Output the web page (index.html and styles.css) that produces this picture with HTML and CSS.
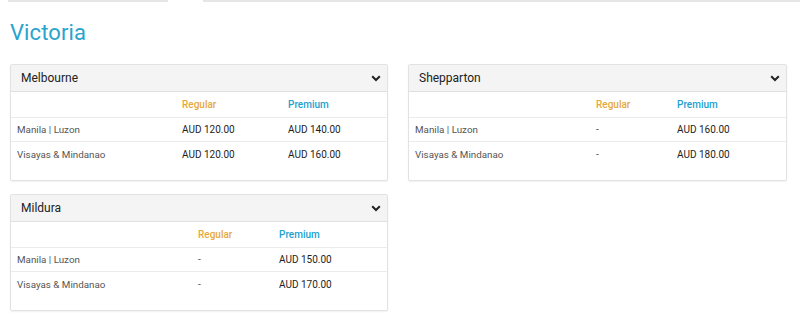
FILE: index.html
```html
<!DOCTYPE html>
<html>
<head>
<meta charset="utf-8">
<link rel="stylesheet" href="styles.css">
</head>
<body>
<div class="tabs"><span class="tab-line first"></span><span class="tab-gap"></span><span class="tab-line rest"></span></div>
<h1 class="title">Victoria</h1>
<div class="grid">
  <div class="card">
    <div class="card-head"><span>Melbourne</span>
      <svg class="chev" viewBox="0 0 10 7" width="10" height="7"><path d="M1.2 1.2 L5 5 L8.8 1.2" fill="none" stroke="#222" stroke-width="2"/></svg>
    </div>
    <table class="rates t1">
      <colgroup><col class="c1"><col class="c2"><col class="c3"></colgroup>
      <tr class="hr"><td></td><td class="reg">Regular</td><td class="prem">Premium</td></tr>
      <tr><td class="dest">Manila | Luzon</td><td class="val">AUD 120.00</td><td class="val">AUD 140.00</td></tr>
      <tr><td class="dest">Visayas &amp; Mindanao</td><td class="val">AUD 120.00</td><td class="val">AUD 160.00</td></tr>
    </table>
  </div>
  <div class="card wide">
    <div class="card-head"><span>Shepparton</span>
      <svg class="chev" viewBox="0 0 10 7" width="10" height="7"><path d="M1.2 1.2 L5 5 L8.8 1.2" fill="none" stroke="#222" stroke-width="2"/></svg>
    </div>
    <table class="rates t2">
      <colgroup><col class="c1"><col class="c2"><col class="c3"></colgroup>
      <tr class="hr"><td></td><td class="reg">Regular</td><td class="prem">Premium</td></tr>
      <tr><td class="dest">Manila | Luzon</td><td class="dash">-</td><td class="val">AUD 160.00</td></tr>
      <tr><td class="dest">Visayas &amp; Mindanao</td><td class="dash">-</td><td class="val">AUD 180.00</td></tr>
    </table>
  </div>
  <div class="card">
    <div class="card-head"><span>Mildura</span>
      <svg class="chev" viewBox="0 0 10 7" width="10" height="7"><path d="M1.2 1.2 L5 5 L8.8 1.2" fill="none" stroke="#222" stroke-width="2"/></svg>
    </div>
    <table class="rates t2">
      <colgroup><col class="c1"><col class="c2"><col class="c3"></colgroup>
      <tr class="hr"><td></td><td class="reg">Regular</td><td class="prem">Premium</td></tr>
      <tr><td class="dest">Manila | Luzon</td><td class="dash">-</td><td class="val">AUD 150.00</td></tr>
      <tr><td class="dest">Visayas &amp; Mindanao</td><td class="dash">-</td><td class="val">AUD 170.00</td></tr>
    </table>
  </div>
</div>
</body>
</html>
```
FILE: styles.css
```css
* { box-sizing: border-box; }
html, body { margin: 0; padding: 0; background: #fff; }
body { font-family: Roboto, "Liberation Sans", sans-serif; color: #333; width: 800px; height: 326px; overflow: hidden; }

.tabs { display: flex; height: 2px; }
.tab-line { height: 2px; background: #e6e6e6; display: block; }
.tab-line.first { width: 160px; margin-left: 8px; }
.tab-gap { width: 35px; }
.tab-line.rest { flex: 1; }

.title {
  margin: 18px 0 0 10px;
  font-weight: 400;
  font-size: 22px;
  line-height: 26px;
  color: #2aa3cd;
  letter-spacing: 0.1px;
}

.grid {
  display: grid;
  grid-template-columns: 378px 379px;
  column-gap: 20px;
  row-gap: 13px;
  margin: 18px 0 0 10px;
  align-items: start;
}

.card {
  border: 1px solid #e2e2e2;
  border-radius: 2px;
  box-shadow: 0 1px 2px rgba(0,0,0,0.06);
  padding-bottom: 14px;
  background: #fff;
}

.card-head {
  height: 27px;
  background: #f4f4f4;
  border-bottom: 1px solid #e0e0e0;
  display: flex;
  align-items: center;
  justify-content: space-between;
  padding: 0 6px 0 10px;
  font-size: 12px;
  color: #222;
}
.chev { display: block; margin-top: 1px; }

.rates {
  width: 100%;
  border-collapse: collapse;
  table-layout: fixed;
  font-size: 10px;
}
.rates td {
  height: 24.5px;
  padding: 0 0 0 6px;
  border-bottom: 1px solid #ececec;
  vertical-align: middle;
  white-space: nowrap;
}
.rates tr:last-child td { border-bottom: none; }
.rates .hr td { height: 25px; }

.t1 .c1 { width: 165px; }
.t1 .c2 { width: 106px; }
.t1 .c3 { width: 105px; }
.t2 .c1 { width: 181px; }
.t2 .c2 { width: 81px; }
.t2 .c3 { width: 114px; }
.wide .t2 .c3 { width: 115px; }

.reg { color: #e8a93a; font-weight: 500; }
.prem { color: #22a1d0; font-weight: 500; }
.dest { color: #555; font-size: 9.8px; }
.val { color: #1e1e1e; font-weight: 400; }
.dash { color: #555; }
```
